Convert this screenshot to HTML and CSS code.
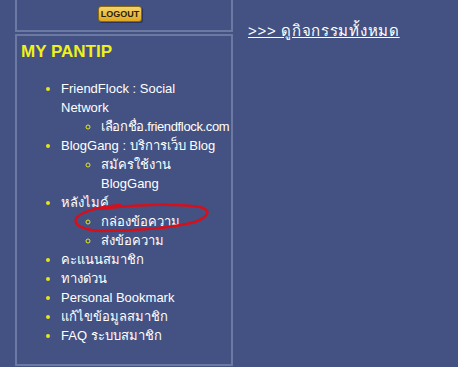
FILE: index.html
```html
<!DOCTYPE html>
<html lang="th">
<head>
    <meta charset="UTF-8">
    <title>My Pantip</title>
    <link rel="stylesheet" href="styles.css">
</head>
<body>
    <div class="page">
        <div class="side">
            <div class="box login-box">
                <div class="since">เข้าระบบครั้งแรกวันที่ 10 มีนาคม 2555</div>
                <a class="logout" href="#">LOGOUT</a>
            </div>

            <div class="box menu-box">
                <h3 class="title">MY PANTIP</h3>
                <ul class="menu">
                    <li>
                        <a href="#">FriendFlock : Social Network</a>
                        <ul>
                            <li class="nowrap"><a href="#">เลือกชื่อ.friendflock.com</a></li>
                        </ul>
                    </li>
                    <li>
                        <a href="#">BlogGang : บริการเว็บ Blog</a>
                        <ul>
                            <li><a href="#">สมัครใช้งาน BlogGang</a></li>
                        </ul>
                    </li>
                    <li>
                        <a href="#">หลังไมค์</a>
                        <ul>
                            <li><a href="#">กล่องข้อความ</a></li>
                            <li><a href="#">ส่งข้อความ</a></li>
                        </ul>
                    </li>
                    <li><a href="#">คะแนนสมาชิก</a></li>
                    <li><a href="#">ทางด่วน</a></li>
                    <li><a href="#">Personal Bookmark</a></li>
                    <li><a href="#">แก้ไขข้อมูลสมาชิก</a></li>
                    <li><a href="#">FAQ ระบบสมาชิก</a></li>
                </ul>

                <svg class="circle" width="140" height="34" viewBox="0 0 140 34">
                    <path d="M27 7 C57 3 97 1 127 5 C138 8 137 14 122 20 C100 26 60 29 27 29 C10 28 1 23 3 17 C6 10 25 5 47 3" fill="none" stroke="#d3101c" stroke-width="2.6" stroke-linecap="round"/>
                </svg>
            </div>
        </div>

        <div class="main">
            <a class="all-link" href="#">&gt;&gt;&gt; ดูกิจกรรมทั้งหมด</a>
        </div>
    </div>
</body>
</html>
```

FILE: styles.css
```css
body {
    margin: 0;
    background-color: #435283;
    font-family: Tahoma, "Liberation Sans", Arial, sans-serif;
    font-size: 13px;
    color: #fff;
    overflow: hidden;
}

.page {
    display: flex;
    padding-left: 15px;
}

.side {
    width: 218px;
    display: flex;
    flex-direction: column;
    gap: 2px;
}

.box {
    border: 2px solid #6b79a3;
}

.login-box {
    margin-top: -20px;
    height: 48px;
    text-align: center;
}

.since {
    height: 19px;
    line-height: 19px;
    font-size: 13px;
    white-space: nowrap;
    overflow: hidden;
}

.logout {
    display: inline-block;
    margin: 5px 8px 0 0;
    padding: 0 2px;
    height: 14px;
    line-height: 15px;
    font-size: 9px;
    font-weight: bold;
    color: #2a2108;
    text-decoration: none;
    background: linear-gradient(#f6d46a, #e0a823);
    border: 1px solid #8a6a10;
    border-radius: 3px;
    box-shadow: 1px 1px 0 #2b3560;
}

.menu-box {
    position: relative;
    height: 328px;
    padding: 0 8px 0 4px;
}

.title {
    margin: 6px 0 0;
    font-size: 17px;
    font-weight: bold;
    color: #f0f01a;
}

.menu {
    margin: 17px 0 0;
    padding-left: 40px;
    list-style: disc;
    color: #e6e61a;
}

.menu ul {
    margin: 0;
    padding-left: 40px;
    list-style: circle;
}

.menu li {
    line-height: 19px;
}

.menu .nowrap {
    white-space: nowrap;
    letter-spacing: -0.35px;
}

.menu a {
    color: #fff;
    text-decoration: none;
}

.circle {
    position: absolute;
    left: 56px;
    top: 166px;
}

.main {
    padding: 19px 0 0 15px;
}

.all-link {
    font-size: 15px;
    color: #fff;
    letter-spacing: 0.7px;
}
```
